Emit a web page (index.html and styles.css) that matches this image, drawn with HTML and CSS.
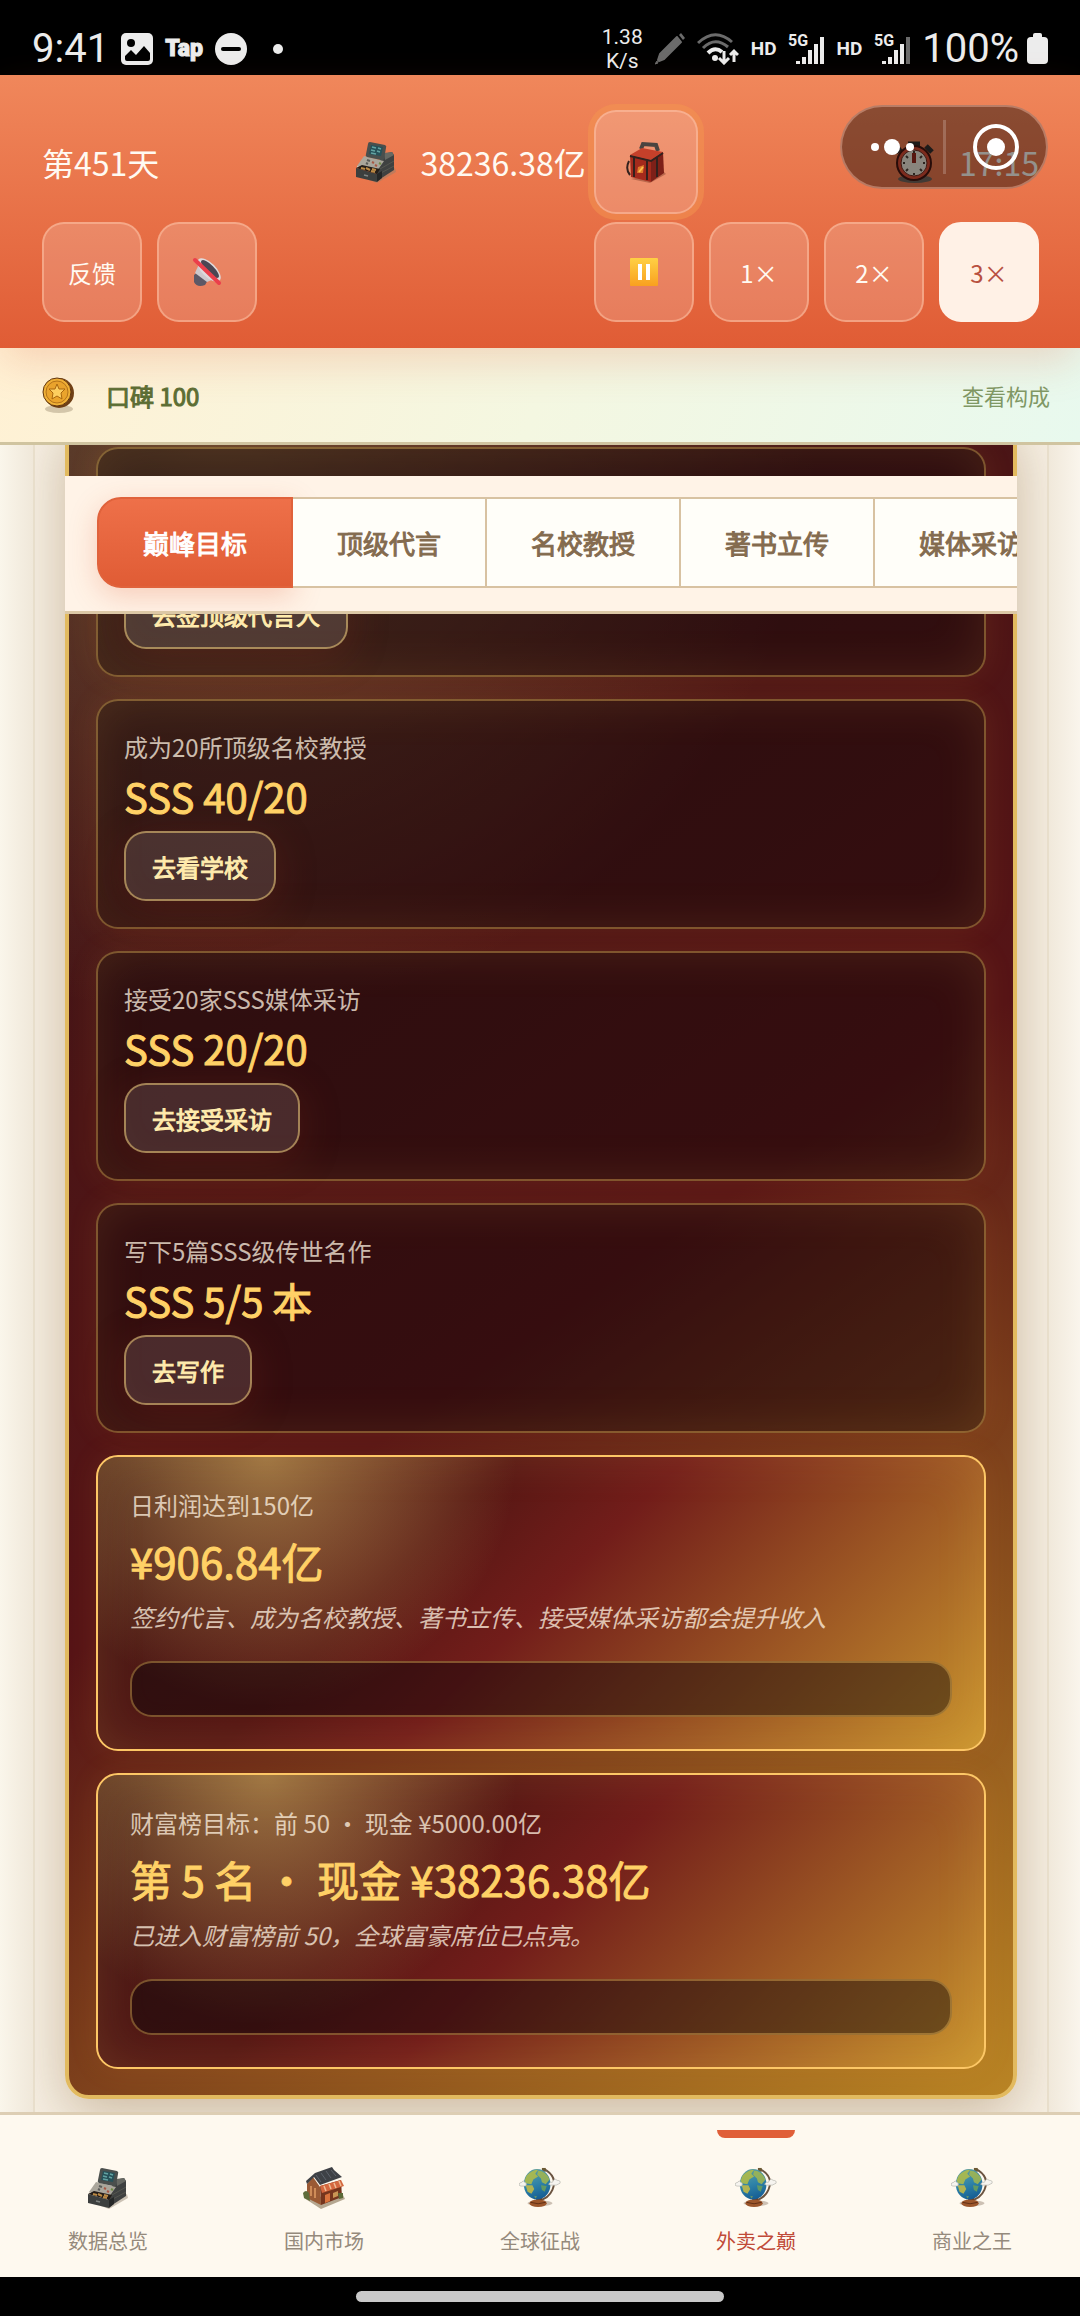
FILE: index.html
```html
<!DOCTYPE html>
<html lang="zh-CN">
<head>
    <meta charset="UTF-8">
    <meta name="viewport" content="width=device-width, initial-scale=1.0">
    <title>外卖之巅</title>
    <link rel="stylesheet" href="styles.css">
</head>
<body>
    <!-- 图标库 -->
    <svg class="sprite" aria-hidden="true">
        <linearGradient id="earth" x1="0.3" y1="0" x2="0.6" y2="1">
            <stop stop-color="#5fa0a0"/>
            <stop offset="0.5" stop-color="#2f83a8"/>
            <stop offset="1" stop-color="#145c93"/>
        </linearGradient>
        <symbol id="icon-register" viewBox="0 0 42 42">
            <path d="M14 39 22 42 41 31 40 27 20 36Z" fill="#8d7f6c" opacity=".45"/>
            <path d="M28 13 37 11 39 14 39 29 22 40 21 27Z" fill="#3f4141"/>
            <path d="M29 12 37 11 39 14 30 19Z" fill="#676963"/>
            <path d="M25 28 39 20M24 33 39 25" stroke="#55564f" stroke-width="1"/>
            <path d="M9 15 29 20 22 30 2 25Z" fill="#aaa69b"/>
            <path d="M2 25 22 30 22 32 2 27Z" fill="#d3cec0"/>
            <path d="M12 19 15 20M11 22 13 23" stroke="#5b5c59" stroke-width="2"/>
            <path d="M17 21 19 22M20 24 22 25" stroke="#a85844" stroke-width="2"/>
            <path d="M24 22 26 23" stroke="#6e8a45" stroke-width="2"/>
            <path d="M1 27 22 33 22 41 1 36Z" fill="#3c3f3e"/>
            <path d="M1 27 7 24 25 28 22 33Z" fill="#241d18"/>
            <path d="M6 27 10 28M11 27 15 29M16 30 20 31M17 28 21 29" stroke="#bb8a45" stroke-width="2"/>
            <path d="M22 33 27 30 27 37 22 41Z" fill="#252727"/>
            <path d="M9 34 13 35" stroke="#808482" stroke-width="1.5"/>
            <path d="M15 1 30 4Q32 5 31 7L29 18Q28 20 26 19L12 16Q10 15 11 13L13 3Q13 1 15 1Z" fill="#4a4f4d"/>
            <path d="M16 4 28 6 26 15 14 13Z" fill="#275159"/>
            <path d="M17 6 21 7M23 7 26 8M16 9 20 10M22 10 25 11M16 12 21 13" stroke="#63a3a2" stroke-width="1.5"/>
        </symbol>
        <symbol id="icon-globe" viewBox="0 0 44 44">
            <ellipse cx="22" cy="38" rx="13" ry="3" fill="#9b8977" opacity=".5"/>
            <path d="M26 2Q41 10 35 24 31 33 21 35" fill="none" stroke="#6b5440" stroke-width="2"/>
            <path d="M24 1h4v4h-4Z" fill="#6b5a34"/>
            <path d="M18 32h6v6h-6Z" fill="#6a351b"/>
            <ellipse cx="20" cy="38" rx="9" ry="4" fill="#9c562b"/>
            <path d="M12 37Q20 40 28 37" stroke="#5f2e14" fill="none"/>
            <ellipse cx="19" cy="18" rx="14" ry="16" fill="url(#earth)"/>
            <path d="M8 9Q14 3 20 3L17 7 20 10 15 13 13 18 7 17 6 14Z" fill="#b4bd45" opacity=".85"/>
            <path d="M20 4Q28 4 32 13L28 18 24 16 23 12 19 8Z" fill="#a9b949" opacity=".8"/>
            <path d="M7 19 14 19 16 23 13 28 9 26Z" fill="#c0b948" opacity=".9"/>
            <path d="M23 19 29 20 27 26 24 24Z" fill="#6fa255" opacity=".8"/>
            <path d="M16 30 19 31 17 33Z" fill="#86a955" opacity=".7"/>
            <path d="M0 19Q0 16 3 16 4 13 6 16 9 17 7 20L2 20Z" fill="#f6f4ef" stroke="#b5b5ae" stroke-width=".7"/>
            <path d="M31 18Q33 15 35 16 37 11 40 14 44 14 43 17L39 19 33 19Z" fill="#f6f4ef" stroke="#b5b5ae" stroke-width=".7"/>
        </symbol>
        <symbol id="icon-shop" viewBox="0 0 42 42">
            <path d="M1 31 18 42 42 32 40 28Z" fill="#b5a790"/>
            <path d="M4 17 10 10 17 20 18 38 4 31Z" fill="#9a5a34"/>
            <path d="M17 19 38 13 39 30 18 38Z" fill="#75351d"/>
            <path d="M8 19v10M12 21v10" stroke="#cf8c58" stroke-width="2"/>
            <path d="M17 19 38 13 41 19 19 26Z" fill="#d4683f"/>
            <path d="M21 19 23 24M26 17 28 22M31 16 33 21M36 14 38 19" stroke="#efbd96" stroke-width="1.5"/>
            <path d="M22 28 27 26 27 34 22 36Z" fill="#d9733d"/>
            <path d="M30 26 35 24 35 29 30 31Z" fill="#c99554"/>
            <path d="M3 14 12 6 29 0 31 3 39 10 17 18 11 10 4 17Z" fill="#3e4146"/>
            <path d="M13 8 18 15M18 6 23 13M23 4 28 11M28 3 33 9" stroke="#5d636b" stroke-width="1"/>
            <path d="M0 26Q3 22 6 26L7 34 1 31Z" fill="#5e6c3a"/>
            <path d="M35 26h5v5l-4 1Z" fill="#5b6a38"/>
        </symbol>
    </svg>

    <div class="app">
        <div class="status-bar">
            <div class="status-left">
                <span class="clock">9:41</span>
                <svg width="32" height="32" viewBox="0 0 32 32">
                    <rect width="32" height="32" rx="5" fill="#ececec"/>
                    <circle cx="10" cy="10" r="4" fill="#000"/>
                    <path d="M4 23 10 17 15 22 23 13 29 20V26Q29 28 27 28H6Q4 28 4 26Z" fill="#000"/>
                </svg>
                <span class="tap">Tap</span>
                <svg width="32" height="32" viewBox="0 0 32 32">
                    <circle cx="16" cy="16" r="16" fill="#ececec"/>
                    <path d="M8 16h16" stroke="#000" stroke-width="4" stroke-linecap="round"/>
                </svg>
                <span class="dot"></span>
            </div>
            <div class="status-right">
                <span class="speed">1.38<br>K/s</span>
                <svg width="30" height="32" viewBox="0 0 30 32" fill="#6b6b6b">
                    <path d="M22 4 26 9 9 26 4 28 3 27 5 21Z" stroke="#6b6b6b" stroke-width="2" stroke-linejoin="round"/>
                    <path d="M24 2 26 0 30 5 28 7Z"/>
                    <path d="M2 28 3 30 0 31Z" stroke="#6b6b6b"/>
                </svg>
                <svg width="42" height="32" viewBox="0 0 42 32" fill="none" stroke-width="3">
                    <path d="M1 10Q18-6 35 9" stroke="#6b6b6b"/>
                    <path d="M6 15Q18 3 31 14" stroke="#6b6b6b"/>
                    <path d="M11 20Q18 13 25 19" stroke="#ececec" stroke-width="4"/>
                    <circle cx="18" cy="25" r="3" fill="#ececec"/>
                    <path d="M27 18V29M22 25 27 30 32 25M37 29V18M33 22 37 18 41 22" stroke="#ececec"/>
                </svg>
                <span class="hd">HD</span>
                <svg class="signal" width="36" height="32" viewBox="0 0 36 32">
                    <text x="0" y="13">5G</text>
                    <path d="M10 28v3M16 24v7M22 17v14M28 11v20M34 4v27"/>
                </svg>
                <span class="hd">HD</span>
                <svg class="signal" width="36" height="32" viewBox="0 0 36 32">
                    <text x="0" y="13">5G</text>
                    <path d="M10 28v3M16 24v7M22 17v14M28 11v20"/>
                    <path class="weak" d="M34 4v27"/>
                </svg>
                <span class="clock">100%</span>
                <svg class="battery" width="21" height="31" viewBox="0 0 21 31" fill="#ececec">
                    <rect y="4" width="21" height="27" rx="4"/>
                    <rect x="6" width="9" height="6" rx="2"/>
                </svg>
            </div>
        </div>

        <header class="game-header">
            <div class="header-row stats">
                <span>第451天</span>
                <div class="cash">
                    <svg class="icon" width="42" height="42"><use href="#icon-register"/></svg>
                    <span>38236.38亿</span>
                    <button class="btn gift" aria-label="礼包">
                        <svg width="40" height="42" viewBox="0 0 40 42">
                            <path d="M5 38 24 42 40 33 37 30Z" fill="#7c3a26" opacity=".45"/>
                            <path d="M15 8 17 3 30 4 32 10" fill="none" stroke="#4a4440" stroke-width="4"/>
                            <path d="M4 14 16 7 37 11 25 19Z" fill="#c5402a"/>
                            <path d="M4 14 25 19 25 41 5 36Z" fill="#a32a1c"/>
                            <path d="M25 19 37 11 38 32 25 41Z" fill="#7d2018"/>
                            <path d="M4 15 25 20 37 12" fill="none" stroke="#33211d" stroke-width="2"/>
                            <path d="M8 16V36M21 20V39M31 16V36" stroke="#33211d" stroke-width="2"/>
                            <path d="M3 20Q-1 28 4 34" fill="none" stroke="#33211d" stroke-width="2"/>
                            <path d="M12 26 18 24 17 32 11 32Z" fill="#e07a2b"/>
                            <path d="M13 31 17 26" stroke="#ffc04c" stroke-width="2"/>
                        </svg>
                    </button>
                </div>
                <div class="timer">
                    <svg class="icon" width="42" height="42" viewBox="0 0 42 42">
                        <ellipse cx="22" cy="38" rx="17" ry="4" fill="#71655c"/>
                        <path d="M15 3 27 3" stroke="#34302d" stroke-width="5"/>
                        <path d="M33 5 39 11M3 11 8 7" stroke="#34302d" stroke-width="5"/>
                        <circle cx="21" cy="22" r="17" fill="#d84a32" stroke="#451610" stroke-width="2"/>
                        <circle cx="21" cy="22" r="13" fill="#ece5d7" stroke="#6e2b20"/>
                        <path d="M21 12V22" stroke="#97281c" stroke-width="4"/>
                        <path d="M21 10v2M21 32v2M10 22h2M30 22h2M13 15l2 2M29 15l-2 2M13 30l2-2M29 30l-2-2" stroke="#4c3e36" stroke-width="2"/>
                    </svg>
                    <span>17:15</span>
                </div>
            </div>
            <div class="header-row">
                <div class="btn-group">
                    <button class="btn">反馈</button>
                    <button class="btn" aria-label="静音">
                        <svg width="30" height="30" viewBox="0 0 30 30">
                            <path d="M2 18 7 14 16 23 13 28Q5 31 2 25Z" fill="#5d5866"/>
                            <path d="M3 16 7 7 22 22 15 25Z" fill="#cdc8cc"/>
                            <ellipse cx="17" cy="13" rx="7" ry="15" transform="rotate(-45 17 13)" fill="#dedadc"/>
                            <ellipse cx="18" cy="12" rx="4" ry="12" transform="rotate(-45 18 12)" fill="#4b4653"/>
                            <path d="M3 3 27 26" stroke="#eb3f4b" stroke-width="4" stroke-linecap="round"/>
                        </svg>
                    </button>
                </div>
                <div class="btn-group">
                    <button class="btn" aria-label="暂停">
                        <svg width="28" height="28" viewBox="0 0 28 28">
                            <defs>
                                <linearGradient id="pause" x2="0" y2="1">
                                    <stop stop-color="#ffd044"/>
                                    <stop offset="1" stop-color="#f9a01f"/>
                                </linearGradient>
                            </defs>
                            <rect width="28" height="28" rx="1" fill="url(#pause)"/>
                            <path d="M10 6v16M18 6v16" stroke="#fff" stroke-width="4"/>
                        </svg>
                    </button>
                    <button class="btn">1×</button>
                    <button class="btn">2×</button>
                    <button class="btn active">3×</button>
                </div>
            </div>
            <div class="capsule">
                <button class="capsule-btn" aria-label="更多">
                    <svg width="44" height="18" viewBox="0 0 44 18" fill="#fff">
                        <circle cx="5" cy="9" r="4"/>
                        <circle cx="22" cy="9" r="8"/>
                        <circle cx="40" cy="9" r="4"/>
                    </svg>
                </button>
                <button class="capsule-btn" aria-label="关闭">
                    <svg width="46" height="46" viewBox="0 0 46 46">
                        <circle cx="23" cy="23" r="21" fill="none" stroke="#fff" stroke-width="4"/>
                        <circle cx="23" cy="23" r="9" fill="#fff"/>
                    </svg>
                </button>
            </div>
        </header>

        <div class="reputation">
            <svg width="32" height="38" viewBox="0 0 32 38">
                <ellipse cx="17" cy="33" rx="14" ry="4" fill="#b8a98c" opacity=".6"/>
                <circle cx="17" cy="17" r="15" fill="#6f4016"/>
                <circle cx="15" cy="16" r="14" fill="#f0b237" stroke="#5f3610"/>
                <circle cx="15" cy="16" r="11" fill="#eaa52d" stroke="#b3741a"/>
                <path d="M15 8 17 13 23 13 19 17 20 23 15 20 10 23 11 17 7 13 13 13Z" fill="#fdd061" stroke="#a9670f"/>
            </svg>
            <span class="reputation-value">口碑 100</span>
            <a class="reputation-link" href="#">查看构成</a>
        </div>

        <main class="stage">
            <nav class="tabs">
                <button class="tab active">巅峰目标</button>
                <button class="tab">顶级代言</button>
                <button class="tab">名校教授</button>
                <button class="tab">著书立传</button>
                <button class="tab">媒体采访</button>
            </nav>
            <div class="panel">
                <section class="peak">
                    <article class="goal collapsed">
                        <button class="goal-btn">去签顶级代言人</button>
                    </article>
                    <article class="goal">
                        <p class="goal-label">成为20所顶级名校教授</p>
                        <p class="goal-value">SSS 40/20</p>
                        <button class="goal-btn">去看学校</button>
                    </article>
                    <article class="goal">
                        <p class="goal-label">接受20家SSS媒体采访</p>
                        <p class="goal-value">SSS 20/20</p>
                        <button class="goal-btn">去接受采访</button>
                    </article>
                    <article class="goal">
                        <p class="goal-label">写下5篇SSS级传世名作</p>
                        <p class="goal-value">SSS 5/5 本</p>
                        <button class="goal-btn">去写作</button>
                    </article>
                    <article class="goal done">
                        <p class="goal-label">日利润达到150亿</p>
                        <p class="goal-value">¥906.84亿</p>
                        <p class="goal-note">签约代言、成为名校教授、著书立传、接受媒体采访都会提升收入</p>
                        <div class="goal-bar"></div>
                    </article>
                    <article class="goal done">
                        <p class="goal-label">财富榜目标：前 50 · 现金 ¥5000.00亿</p>
                        <p class="goal-value">第 5 名 · 现金 ¥38236.38亿</p>
                        <p class="goal-note">已进入财富榜前 50，全球富豪席位已点亮。</p>
                        <div class="goal-bar"></div>
                    </article>
                </section>
            </div>
        </main>

        <nav class="bottom-nav">
            <a class="nav-item" href="#">
                <svg width="42" height="42"><use href="#icon-register"/></svg>
                <span>数据总览</span>
            </a>
            <a class="nav-item" href="#">
                <svg width="42" height="42"><use href="#icon-shop"/></svg>
                <span>国内市场</span>
            </a>
            <a class="nav-item" href="#">
                <svg width="42" height="42"><use href="#icon-globe"/></svg>
                <span>全球征战</span>
            </a>
            <a class="nav-item active" href="#">
                <svg width="42" height="42"><use href="#icon-globe"/></svg>
                <span>外卖之巅</span>
            </a>
            <a class="nav-item" href="#">
                <svg width="42" height="42"><use href="#icon-globe"/></svg>
                <span>商业之王</span>
            </a>
        </nav>
        <div class="home-bar"><span></span></div>
    </div>
</body>
</html>
```

FILE: styles.css
```css
* {
    margin: 0;
    padding: 0;
    box-sizing: border-box;
}

body {
    font-family: 'Noto Sans CJK SC', sans-serif;
    background: #faf5ea;
}

button {
    font-family: inherit;
    cursor: pointer;
}

a {
    text-decoration: none;
}

svg {
    display: block;
    flex-shrink: 0;
}

.sprite {
    position: absolute;
    width: 0;
    height: 0;
}

.app {
    display: flex;
    flex-direction: column;
    height: 100vh;
    overflow: hidden;
}

/* 系统状态栏 */
.status-bar {
    display: flex;
    justify-content: space-between;
    align-items: center;
    height: 75px;
    padding: 22px 32px 0;
    background: #000;
    color: #ececec;
    font-family: Roboto, sans-serif;
    flex-shrink: 0;
}

.status-left, .status-right {
    display: flex;
    align-items: center;
    gap: 12px;
}

.clock {
    font-size: 40px;
    line-height: 44px;
}

.tap {
    font-size: 23px;
    font-weight: 900;
    -webkit-text-stroke: 1px #ececec;
}

.dot {
    width: 10px;
    height: 10px;
    margin-left: 14px;
    border-radius: 50%;
    background: #ececec;
}

.speed {
    font-size: 21px;
    line-height: 24px;
    text-align: center;
}

.hd {
    font-size: 19px;
    font-weight: 700;
}

.signal {
    overflow: visible;
}

.signal text {
    font-size: 16px;
    font-weight: 700;
    fill: #ececec;
}

.signal path {
    stroke: #ececec;
    stroke-width: 4;
}

.signal .weak {
    stroke: #6b6b6b;
}

.battery {
    margin-left: -4px;
}

/* 顶部信息 */
.game-header {
    position: relative;
    z-index: 2;
    flex-shrink: 0;
    padding: 35px 41px 26px 42px;
    background: linear-gradient(180deg, #f0875b, #e05c35);
    box-shadow: 0 16px 40px -4px rgba(224, 92, 53, 0.22);
    color: #fffaf2;
}

.header-row {
    display: flex;
    justify-content: space-between;
    align-items: center;
}

.stats {
    margin-bottom: 8px;
    font-size: 32px;
    line-height: 44px;
}

.cash, .timer {
    display: flex;
    align-items: center;
}

.icon {
    margin-right: 24px;
}

.btn-group {
    display: flex;
    gap: 15px;
}

.btn {
    display: flex;
    align-items: center;
    justify-content: center;
    width: 100px;
    height: 100px;
    background: rgba(255, 255, 255, 0.18);
    border: 2px solid rgba(255, 200, 170, 0.5);
    border-radius: 22px;
    color: #fffaf2;
    font-size: 24px;
}

.btn.active {
    background: #fff1e6;
    border-color: #fff1e6;
    color: #b85040;
}

.gift {
    width: 104px;
    height: 104px;
    margin-left: 8px;
    box-shadow: 0 0 0 6px rgba(243, 150, 80, 0.5);
}

/* 小程序胶囊，浮在头部之上 */
.capsule {
    position: absolute;
    top: 30px;
    right: 32px;
    display: flex;
    align-items: center;
    width: 208px;
    height: 84px;
    background: rgba(0, 0, 0, 0.42);
    border: 2px solid rgba(255, 200, 180, 0.4);
    border-radius: 42px;
}

.capsule-btn {
    display: flex;
    flex: 1;
    align-items: center;
    justify-content: center;
    height: 54px;
    background: none;
    border: none;
}

.capsule-btn + .capsule-btn {
    border-left: 3px solid rgba(255, 255, 255, 0.2);
}

/* 口碑 */
.reputation {
    position: relative;
    z-index: 1;
    display: flex;
    align-items: center;
    flex-shrink: 0;
    height: 97px;
    padding: 0 30px 0 42px;
    background: linear-gradient(110deg, #fff1d4, #f4f7e1 50%, #e8f9ee);
    border-bottom: 3px solid #d0c4a0;
}

.reputation-value {
    margin-left: 32px;
    color: #5c6e34;
    font-size: 24px;
    -webkit-text-stroke: 1px #5c6e34;
}

.reputation-link {
    margin-left: auto;
    color: #7f9865;
    font-size: 22px;
}

/* 主区域 */
.stage {
    position: relative;
    flex: 1;
    min-height: 0;
    padding: 0 31px 0 33px;
    background: linear-gradient(90deg, #faf6eb, #f0e8da 3%, #f0e8da 97%, #faf5ec);
    overflow: hidden;
}

.panel {
    display: flex;
    flex-direction: column;
    justify-content: flex-end;
    height: 100%;
    padding: 0 30px 13px;
    background: #f7f0e4;
    border: 2px solid #e8decb;
    border-width: 0 2px;
    overflow: hidden;
}

.tabs {
    position: absolute;
    top: 31px;
    left: 65px;
    right: 63px;
    z-index: 1;
    display: flex;
    padding: 21px 32px 23px;
    background: #fff3e7;
    border-bottom: 3px solid #dcc8a6;
    overflow: hidden;
}

.tab {
    flex-shrink: 0;
    height: 91px;
    padding: 0 44px;
    background: #fffef9;
    border: 2px solid #d8c2a2;
    border-left-width: 0;
    color: #846b4f;
    font-size: 26px;
    -webkit-text-stroke: 1px #846b4f;
}

.tab.active {
    background: linear-gradient(180deg, #ee7049, #e05c35);
    border: 2px solid #e0623b;
    border-radius: 24px 0 0 24px;
    box-shadow: 0 8px 28px rgba(224, 92, 53, 0.25);
    color: #fff;
    -webkit-text-stroke: 1px #fff;
}

/* 巅峰目标 */
.peak {
    display: flex;
    flex-direction: column;
    gap: 22px;
    padding: 26px 27px;
    background:
        radial-gradient(circle 600px at 16% 0, rgba(255, 215, 110, 0.24), transparent),
        linear-gradient(145deg, #35181a, #4b1516 30%, #561416 53%, #b98424);
    border: 4px solid #e2ba5f;
    border-radius: 24px;
    box-shadow: 0 16px 56px rgba(120, 80, 30, 0.34);
}

.goal {
    padding: 26px;
    background: rgba(10, 5, 8, 0.42);
    border: 2px solid rgba(235, 185, 90, 0.42);
    border-radius: 22px;
    box-shadow: 0 0 30px rgba(255, 160, 50, 0.1), inset 0 0 50px rgba(255, 180, 80, 0.12);
}

.collapsed {
    display: flex;
    align-items: flex-end;
    height: 230px;
}

.goal-label {
    color: rgba(255, 243, 225, 0.75);
    font-size: 24px;
    line-height: 40px;
}

.goal-value {
    margin-bottom: 6px;
    color: #ffd166;
    font-size: 40px;
    line-height: 58px;
    -webkit-text-stroke: 1px #ffd166;
}

.goal-btn {
    display: block;
    height: 70px;
    padding: 0 26px;
    background: rgba(255, 255, 255, 0.12);
    border: 2px solid rgba(255, 220, 130, 0.5);
    border-radius: 22px;
    box-shadow: 0 8px 40px rgba(150, 50, 30, 0.25);
    color: #ffebad;
    font-size: 24px;
    -webkit-text-stroke: 1px #ffebad;
}

.goal.done {
    padding: 28px 32px 32px;
    background:
        radial-gradient(circle 250px at 19% 0, rgba(255, 225, 120, 0.45), transparent),
        linear-gradient(135deg, #421a16, #561714 35%, #721d1a 50%, #c9942e);
    border-color: #fdc766;
    box-shadow: 0 0 30px rgba(255, 160, 50, 0.1), inset 0 0 50px rgba(255, 200, 100, 0.14);
}

.done .goal-value {
    margin: 6px 0;
    font-size: 42px;
    line-height: 60px;
}

.goal-note {
    color: rgba(255, 243, 225, 0.75);
    font-size: 24px;
    font-style: italic;
    line-height: 40px;
}

.goal-bar {
    height: 56px;
    margin-top: 24px;
    background: rgba(10, 5, 8, 0.45);
    border: 2px solid rgba(235, 185, 90, 0.4);
    border-radius: 22px;
}

/* 底部导航 */
.bottom-nav {
    display: flex;
    flex-shrink: 0;
    height: 165px;
    padding-top: 15px;
    background: #fef9ef;
    border-top: 3px solid #ddceb4;
}

.nav-item {
    position: relative;
    display: flex;
    flex: 1;
    flex-direction: column;
    align-items: center;
    gap: 16px;
    padding-top: 37px;
    color: #958a7c;
    font-size: 20px;
    line-height: 32px;
}

.nav-item.active {
    color: #c04a38;
}

.nav-item.active::before {
    content: '';
    position: absolute;
    top: 0;
    width: 36%;
    height: 8px;
    background: #e05f38;
    border-radius: 0 0 8px 8px;
}

.home-bar {
    display: flex;
    justify-content: center;
    flex-shrink: 0;
    height: 39px;
    padding-top: 14px;
    background: #000;
}

.home-bar span {
    width: 34%;
    height: 11px;
    background: #c9c9c9;
    border-radius: 6px;
}
```
